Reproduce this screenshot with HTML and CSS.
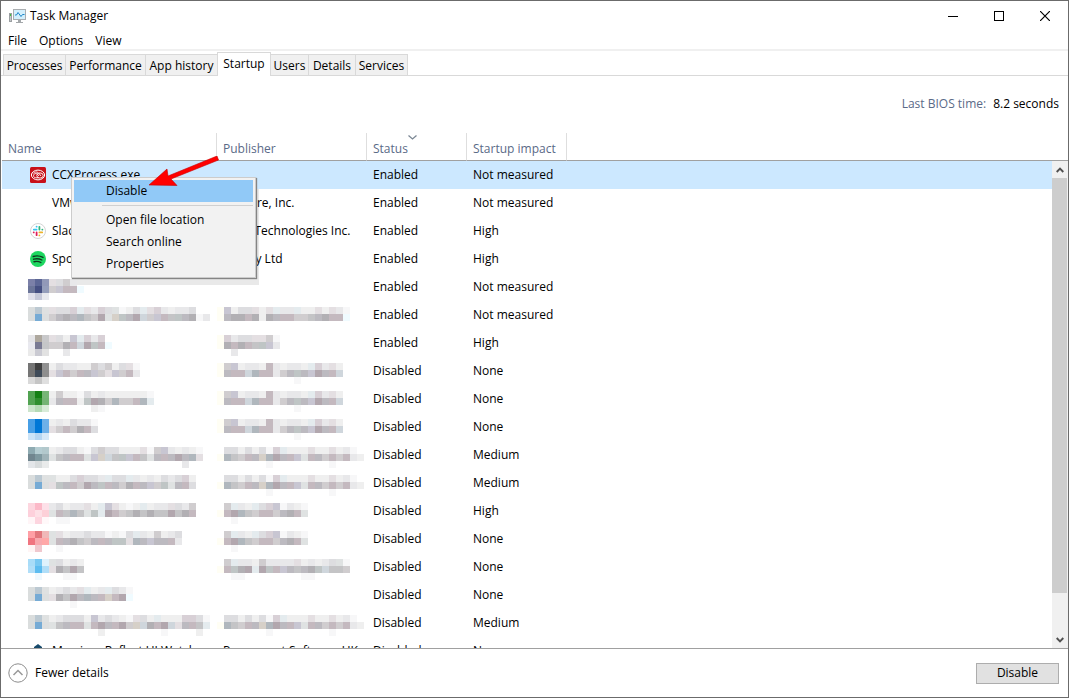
FILE: index.html
```html
<!DOCTYPE html>
<html lang="en">
<head>
    <meta charset="utf-8">
    <title>Task Manager</title>
    <link rel="stylesheet" href="styles.css">
</head>
<body>
    <div class="window">
        <header class="titlebar">
            <svg class="app-icon" width="17" height="15" viewBox="0 0 17 15">
                <rect x="0.5" y="4.5" width="2" height="8" fill="#c4c7ca" stroke="#9b9fa2"/>
                <rect x="1" y="5" width="1" height="2" fill="#3fc03f"/>
                <rect x="4.5" y="0.5" width="12" height="10" fill="#d3effc" stroke="#a9adb0"/>
                <path d="M6 6h1.500l1.500-2.500 3 4 1.500-2h2" fill="none" stroke="#1b86c9"/>
                <path d="M9 11h3v2h2v1H7v-1h2z" fill="#a3a7aa"/>
            </svg>
            <span class="title">Task Manager</span>
            <div class="controls">
                <button type="button" aria-label="Minimize"><svg width="10" height="10"><path d="M0 5.500h10" stroke="#000"/></svg></button>
                <button type="button" aria-label="Maximize"><svg width="10" height="10"><rect x="0.5" y="0.5" width="9" height="9" fill="none" stroke="#000"/></svg></button>
                <button type="button" aria-label="Close"><svg width="10" height="10"><path d="M0 0l10 10M10 0L0 10" stroke="#000" stroke-width="1.200"/></svg></button>
            </div>
        </header>

        <nav class="menubar">
            <a href="#">File</a>
            <a href="#">Options</a>
            <a href="#">View</a>
        </nav>

        <div class="tabs" role="tablist">
            <button type="button" role="tab" class="tab tab-processes">Processes</button>
            <button type="button" role="tab" class="tab tab-performance">Performance</button>
            <button type="button" role="tab" class="tab tab-history">App history</button>
            <button type="button" role="tab" class="tab tab-startup active" aria-selected="true">Startup</button>
            <button type="button" role="tab" class="tab tab-users">Users</button>
            <button type="button" role="tab" class="tab tab-details">Details</button>
            <button type="button" role="tab" class="tab tab-services">Services</button>
        </div>

        <div class="bios"><span class="bios-label">Last BIOS time:</span><span>8.2 seconds</span></div>

        <main class="panel">
            <div class="list">
                <table>
                    <colgroup>
                        <col class="col-name">
                        <col class="col-publisher">
                        <col class="col-status">
                        <col class="col-impact">
                        <col>
                    </colgroup>
                    <thead>
                        <tr>
                            <th>Name</th>
                            <th>Publisher</th>
                            <th>Status
                                <svg class="sort" width="9" height="5" viewBox="0 0 9 5"><path d="M0.500 0.500l4 3.500 4-3.500" fill="none" stroke="#7b8794" stroke-width="1.300"/></svg>
                            </th>
                            <th>Startup impact</th>
                            <td></td>
                        </tr>
                    </thead>
                    <tbody id="rows">
                        <tr class="selected">
                            <td><div class="name">
                                <svg width="16" height="16" viewBox="0 0 16 16">
                                    <rect width="16" height="16" rx="1.500" fill="#c8101a"/>
                                    <ellipse cx="8" cy="8" rx="6.600" ry="4.900" fill="none" stroke="#fff"/>
                                    <ellipse cx="10" cy="8.500" rx="3.200" ry="2.600" fill="none" stroke="#fff" stroke-width=".9"/>
                                    <path d="M3 6.500c1.500-2 4.500-2 6 0l2 2.500M8.500 10.800H5.800c-3 0-3-4.300 0-4.300 1.500 0 2 1 3.200 2.500" fill="none" stroke="#fff" stroke-width=".9"/>
                                </svg>CCXProcess.exe</div></td>
                            <td></td><td>Enabled</td><td>Not measured</td><td></td>
                        </tr>
                        <tr>
                            <td><div class="name no-icon">VMware Tools</div></td>
                            <td>VMware, Inc.</td><td>Enabled</td><td>Not measured</td><td></td>
                        </tr>
                        <tr>
                            <td><div class="name">
                                <svg width="16" height="16" viewBox="0 0 16 16">
                                    <circle cx="8" cy="8" r="7.500" fill="#fff" stroke="#d4d4d4"/>
                                    <g fill="none" stroke-width="1.800" stroke-linecap="round">
                                        <path d="M6.600 3.600v.1M3.800 6.600h2.800" stroke="#36c5f0"/>
                                        <path d="M9.400 3.800v2.800M12.300 6.600h.1" stroke="#2eb67d"/>
                                        <path d="M9.400 12.300v.1M9.400 9.400h2.800" stroke="#ecb22e"/>
                                        <path d="M6.600 9.400v2.800M3.700 9.400h.1" stroke="#e01e5a"/>
                                    </g>
                                </svg>Slack</div></td>
                            <td>Slack Technologies Inc.</td><td>Enabled</td><td>High</td><td></td>
                        </tr>
                        <tr>
                            <td><div class="name">
                                <svg width="16" height="16" viewBox="0 0 16 16">
                                    <circle cx="8" cy="8" r="8" fill="#1ed760"/>
                                    <path d="M3.200 5.500c3.200-1 6.800-.7 9.800.9M3.600 8.200c2.800-.8 5.800-.5 8.300.8M4 10.700c2.400-.6 4.800-.4 6.900.8" fill="none" stroke="#10351f" stroke-width="1.400" stroke-linecap="round"/>
                                </svg>Spotify</div></td>
                            <td>Spotify Ltd</td><td>Enabled</td><td>High</td><td></td>
                        </tr>
                    </tbody>
                </table>
            </div>

            <div class="scrollbar">
                <button type="button" aria-label="Scroll up"><svg width="8" height="6" viewBox="0 0 8 6"><path d="M0.700 5L4 1.700 7.300 5" fill="none" stroke="#505050" stroke-width="1.900"/></svg></button>
                <div class="thumb"></div>
                <div class="track"></div>
                <button type="button" aria-label="Scroll down"><svg width="8" height="6" viewBox="0 0 8 6"><path d="M0.700 1L4 4.300 7.300 1" fill="none" stroke="#505050" stroke-width="1.900"/></svg></button>
            </div>

            <div class="context-menu" role="menu">
                <button type="button" role="menuitem" class="current">Disable</button>
                <hr>
                <button type="button" role="menuitem">Open file location</button>
                <button type="button" role="menuitem">Search online</button>
                <button type="button" role="menuitem">Properties</button>
            </div>
            <svg class="arrow" width="70" height="32" viewBox="0 0 70 32">
                <path d="M0 29L18 13l1 7L68 0l1.500 4L22 23l6 6.500z" fill="#f00" stroke="#c40000" stroke-width=".6"/>
            </svg>
        </main>

        <footer class="footer">
            <button type="button" class="fewer">
                <svg width="20" height="20" viewBox="0 0 20 20"><circle cx="10" cy="10" r="9.200" fill="none" stroke="#8c8c8c"/><path d="M5.500 12L10 7.500l4.500 4.500" fill="none" stroke="#9a9a9a" stroke-width="1.500"/></svg>
                Fewer details
            </button>
            <button type="button" class="action">Disable</button>
        </footer>
    </div>
    <script src="script.js"></script>
</body>
</html>
```
FILE: styles.css
```css
* { box-sizing: border-box; }
body { margin: 0; font-family: "Segoe UI", "Open Sans", sans-serif; font-size: 12px; line-height: 16px; color: #000; background: #fff; }
button { font: inherit; color: inherit; border: none; background: none; padding: 0; margin: 0; }
svg { display: block; flex: none; }

.window { display: flex; flex-direction: column; height: 100vh; border: 1px solid #6b6b6b; overflow: hidden; }

.titlebar { display: flex; align-items: center; height: 30px; padding-left: 8px; }
.title { margin-left: 4px; }
.controls { display: flex; align-self: stretch; margin-left: auto; }
.controls button { width: 46px; display: flex; align-items: center; justify-content: center; }

.menubar { display: flex; gap: 12px; height: 20px; padding: 2px 7px 0; border-bottom: 2px solid #f0f0f0; }
.menubar a { color: inherit; text-decoration: none; }

.tabs { display: flex; align-items: flex-end; height: 25px; padding-left: 2px; border-bottom: 1px solid #d9d9d9; }
.tab { height: 21px; padding-top: 2px; background: #f0f0f0; border: 1px solid #d9d9d9; border-left: none; border-bottom: none; white-space: nowrap; }
.tab:first-child { border-left: 1px solid #d9d9d9; }
.tab.active { height: 24px; margin-bottom: -1px; padding: 0 0 1px; background: #fff; border-left: 1px solid #d9d9d9; }
.tab-processes { width: 63px; }
.tab-performance { width: 80px; }
.tab-history { width: 71px; border-right: none; }
.tab-startup { width: 54px; }
.tab-users { width: 38px; }
.tab-details { width: 47px; }
.tab-services { width: 52px; }

.bios { display: flex; justify-content: flex-end; gap: 7px; height: 57px; padding: 20px 9px 0 0; }
.bios-label { color: #5a6a87; }

.panel { position: relative; display: flex; flex: 1; min-height: 0; padding-left: 1px; border-bottom: 1px solid #a0a0a0; }
.list { flex: 1; min-width: 0; overflow: hidden; }

table { width: 100%; table-layout: fixed; border-collapse: separate; border-spacing: 0; }
.col-name { width: 215px; }
.col-publisher { width: 150px; }
.col-status, .col-impact { width: 100px; }
th, td { height: 28px; padding: 0 0 0 6px; text-align: left; white-space: nowrap; }
th { position: relative; padding-top: 4px; font-weight: normal; color: #5a6a87; border-right: 1px solid #dedede; }
thead th, thead td { border-bottom: 1px solid #a0a0a0; }
.sort { position: absolute; top: 2px; left: 41px; }
.selected { background: #cce8ff; }
.name { display: flex; align-items: center; gap: 6px; padding-left: 22px; }
.no-icon { padding-left: 44px; }
.hidden-name { padding-left: 26px; }
.hidden-publisher { padding-left: 0; }

.scrollbar { display: flex; flex-direction: column; width: 16px; margin-top: 27px; border-top: 1px solid #a0a0a0; background: #f0f0f0; }
.scrollbar button { height: 17px; display: flex; align-items: center; justify-content: center; }
.thumb { flex: 11; margin-right: 1px; background: #cdcdcd; }
.track { flex: 1; }

.context-menu { position: absolute; top: 44px; left: 70px; width: 185px; padding: 2px; background: #f2f2f2; border: 1px solid #ccc; box-shadow: 1px 1px 1px #858585; }
.context-menu::after { content: ""; position: absolute; z-index: -1; top: 8px; left: 5px; right: -4px; bottom: -8px; background: #e9e9e9; }
.context-menu button { display: block; width: 100%; height: 22px; padding-left: 32px; text-align: left; }
.context-menu .current { background: #91c9f7; }
.context-menu hr { height: 1px; margin: 3px 0 3px 28px; border: none; background: #d0d0d0; }
.arrow { position: absolute; top: 23px; left: 148px; }

.footer { display: flex; align-items: center; justify-content: space-between; height: 48px; padding: 0 9px 0 7px; }
.fewer { display: flex; align-items: center; gap: 7px; }
.action { width: 83px; height: 21px; background: #e1e1e1; border: 1px solid #adadad; }
```
FILE: script.js
```js
// Mosaic blocks, one letter for each tone
const tones = {
    w: '#f7f7f8', x: '#efefef', y: '#e8e8ea', v: '#e4dfe2', u: '#dddde0', t: '#d8d0d6',
    g: '#dfe2e2', s: '#d0cdcf', r: '#c4c4c6', q: '#c4b9bf', p: '#bcbac0', o: '#bfc5c5',
    n: '#b2b0b4', m: '#b2a7ae', b: '#b0b7bd', l: '#c8c6d2', k: '#cfd6dc', e: '#e4ebee',
    f: '#f0fbff', z: '#fffef4', d: '#d6d0c8'
};
const block = 7;

const appIcon = ['dadddd bcc9d2 dfe1e1', 'dadddd 76abd5 dddfdf'];
const microsoft = ['zslxyyxqyxyyxetyvx', 'zpqqkbqqyspoplmpqk', '...........w'];
const longPublisher = ['.uuxuxuwtexxxvxxvxyw', 'zbrsqpdbmpqlgqpsqsqyx', '.......w........w'];
const shortPublisher = ['.seyxeutlwyxw', 'zqmbrsqqspnqg', '..w'];

const apps = [
    { icon: ['7b80a8 5d6796 9299b8', '6b7599 454f82 959ebb', 'e0e0ea c5c8d8 e8e9ee'],
      name: ['vusy', 'slqqf'], status: 'Enabled', impact: 'Not measured' },
    { icon: appIcon, name: ['vuutevytugwxuevtyxyyu', 'spnpbrsmgdopmkslqropnwy'],
      publisher: ['zlxuuvxveyyexxvxvyw', 'zpnnqnxnpqqssrpnqqf'], status: 'Enabled', impact: 'Not measured' },
    { icon: ['e5e5e8 aea89e c8c8ca', 'e9e9ef 7a7b94 c5c6c8', 'eaeaea cacad2 e2e2e2'],
      name: ['vuxletyt', 'ssnqkmoqf', '..y'],
      publisher: ['ztyuuvvsw', 'znqnqroly', '..y'], status: 'Enabled', impact: 'High' },
    { icon: ['757575 404040 919191', '757575 3f4b59 8e8e8e', 'd9d9d9 c5c5c5 dfdfdf'],
      name: ['xuyyxxsusxuvw', 'vlqsqplsvlsqy'], publisher: microsoft, status: 'Disabled', impact: 'None' },
    { icon: ['52a352 158015 77b577', '52a352 2f8f2f 74b474', 'cde5cd b5dab5 d8ebd8'],
      name: ['xsxxwuxyxxxxxxw', 'ypqqxomnsbssqbe', '......xw'], publisher: microsoft, status: 'Disabled', impact: 'None' },
    { icon: ['479fe6 0078d7 6db0e8', '479fe6 0078d7 6db0e8', 'cbe4f8 b5d6f2 d5e8f8'],
      name: ['xyxuyyw', 'vsqsnqu'], publisher: microsoft, status: 'Disabled', impact: 'None' },
    { icon: ['8fabb2 b5cdd2 b2c8cc', '71868f 7f99a0 9fb3b8', 'e3e6e9 d8dcdd e9ebeb'],
      name: ['xyuuxwusuuxxxvwslyxyxw', 'grpqqgldkrolqrgpqpmpbv', '...................y'],
      publisher: longPublisher, status: 'Disabled', impact: 'Medium' },
    { icon: appIcon, name: ['gxxutuuyeuueyxyxuyutx', 'vopqsmpoqpsnqplsogpqu'],
      publisher: longPublisher, status: 'Disabled', impact: 'Medium' },
    { icon: ['fdd6df fcb9c8 fde0e8', 'fdd0db fde0e6 fdd0d8', 'fff5f7 fdd5df fff8f9'],
      name: ['yuxyyvxelvxwxexyyvuys', 'gqrbrgoemqsrnrnrrmrnq', '.ww'], publisher: shortPublisher, status: 'Disabled', impact: 'High' },
    { icon: ['ff9fa5 e2777d f0b8b8', 'f07580 f8a8ae ffa8a8', 'fff5f5 f0c8ce ffffff'],
      name: ['gvxyyuyywxwueyxsxyu', 'gqpnrspqpoovbplppqy', '.w'], publisher: shortPublisher, status: 'Disabled', impact: 'None' },
    { icon: ['a8dcf8 78c8f2 dff2fc', 'b0def8 5cbcf0 b0def8', 'ffffff eef8fe ffffff'],
      name: ['guxyx', 'vnrmr', '..ww'],
      publisher: ['.seyyxsyyyyvxyxyugw', 'zqonmemoqlprpnokrrs', '..ww........ww'], status: 'Disabled', impact: 'None' },
    { icon: appIcon, name: ['xyuyvexyeuyw', 'vnrmpbpqdqmf', '...w'], status: 'Disabled', impact: 'None' },
    { icon: appIcon, name: ['xyuuuxlyuyxwvuxexxxttuw', 'grpqqgqmpqmsdknqmkvpqre', '.......x........w....x'],
      publisher: longPublisher, status: 'Disabled', impact: 'Medium' }
];

function mosaic(lines, icon) {
    const offset = icon ? 3 : 0;
    const width = (offset + Math.max(...lines.map(line => line.length))) * block;
    let rects = '';
    const add = (col, row, fill) => {
        rects += `<rect x="${col * block}" y="${row * block}" width="${block}" height="${block}" fill="${fill}"/>`;
    };
    (icon || []).forEach((line, row) => line.split(' ').forEach((hex, col) => add(col, row, '#' + hex)));
    lines.forEach((line, row) => [...line].forEach((key, col) => {
        if (tones[key]) add(col + offset, row, tones[key]);
    }));
    return `<svg width="${width}" height="28" viewBox="0 -6 ${width} 28" shape-rendering="crispEdges">${rects}</svg>`;
}

const rows = document.getElementById('rows');
apps.forEach(app => {
    rows.insertAdjacentHTML('beforeend', `
        <tr>
            <td class="hidden-name">${mosaic(app.name, app.icon)}</td>
            <td class="hidden-publisher">${app.publisher ? mosaic(app.publisher) : ''}</td>
            <td>${app.status}</td>
            <td>${app.impact}</td>
            <td></td>
        </tr>`);
});
rows.insertAdjacentHTML('beforeend', `
    <tr>
        <td><div class="name"><svg width="16" height="16"><path d="M4 4l4-3 4 3v8H4z" fill="#174a6b"/></svg>Macrium Reflect UI Watcher</div></td>
        <td>Paramount Software UK</td><td>Disabled</td><td>None</td><td></td>
    </tr>`);
```
